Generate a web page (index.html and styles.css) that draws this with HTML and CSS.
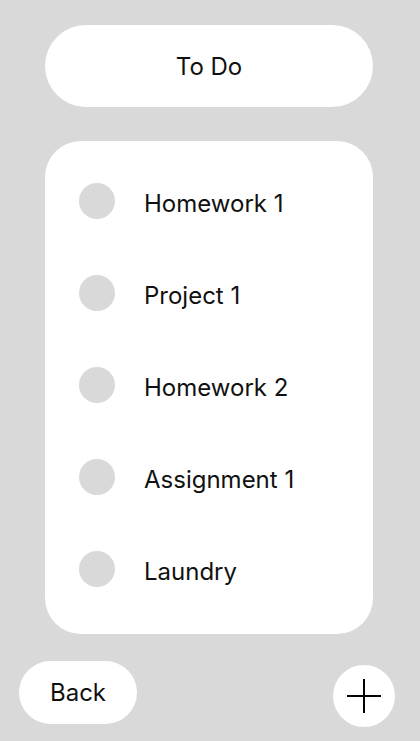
FILE: index.html
```html
<!DOCTYPE html>
<html lang="en">
<head>
  <meta charset="UTF-8">
  <meta name="viewport" content="width=device-width, initial-scale=1.0">
  <title>To Do</title>
  <link rel="stylesheet" href="styles.css">
</head>
<body>

<div class="screen">
  <div class="title">To Do</div>

  <ul class="tasks">
    <li class="task"><span class="check"></span><span class="label">Homework 1</span></li>
    <li class="task"><span class="check"></span><span class="label">Project 1</span></li>
    <li class="task"><span class="check"></span><span class="label">Homework 2</span></li>
    <li class="task"><span class="check"></span><span class="label">Assignment 1</span></li>
    <li class="task"><span class="check"></span><span class="label">Laundry</span></li>
  </ul>

  <div class="footer">
    <button class="back">Back</button>
    <button class="add" aria-label="Add task">
      <svg width="34" height="34" viewBox="0 0 34 34">
        <path d="M17 0V34M0 17H34" stroke="#000" stroke-width="2" fill="none"/>
      </svg>
    </button>
  </div>
</div>

</body>
</html>
```

FILE: styles.css
```css
body {
  font-family: Inter, "Noto Sans", sans-serif;
  margin: 0;
  background-color: #d9d9d9;
  color: #111;
}

.screen {
  width: 420px;
  height: 741px;
  box-sizing: border-box;
  padding-top: 25px;
}

.title {
  margin: 0 47px 0 45px;
  height: 82px;
  border-radius: 41px;
  background-color: #fff;
  display: flex;
  align-items: center;
  justify-content: center;
  font-size: 24px;
}

.tasks {
  list-style: none;
  margin: 34px 47px 0 45px;
  padding: 42px 34px 47px;
  height: 493px;
  box-sizing: border-box;
  background-color: #fff;
  border-radius: 36px;
  display: flex;
  flex-direction: column;
  gap: 56px;
}

.task {
  display: flex;
  align-items: center;
  gap: 29px;
  height: 36px;
  font-size: 24px;
}

.label {
  padding-top: 5px;
}

.check {
  width: 36px;
  height: 36px;
  border-radius: 50%;
  background-color: #d9d9d9;
  flex-shrink: 0;
}

.footer {
  display: flex;
  justify-content: space-between;
  align-items: flex-start;
  margin-top: 27px;
  padding: 0 25px 0 19px;
}

button {
  border: none;
  background-color: #fff;
  font-family: inherit;
  color: #111;
  cursor: pointer;
  padding: 0;
}

.back {
  width: 118px;
  height: 63px;
  border-radius: 32px;
  font-size: 24px;
}

.add {
  width: 62px;
  height: 62px;
  margin-top: 4px;
  border-radius: 50%;
  display: flex;
  align-items: center;
  justify-content: center;
}
```
